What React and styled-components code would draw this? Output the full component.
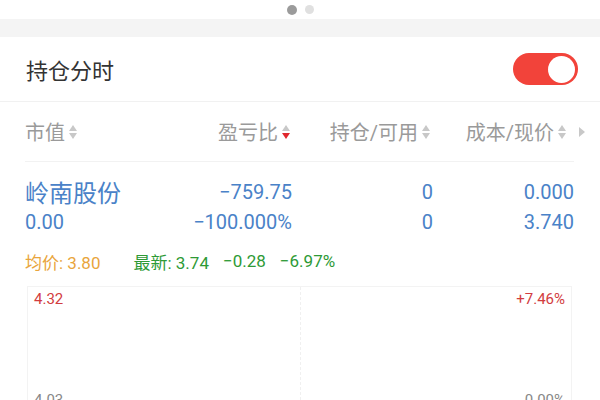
import styled, { createGlobalStyle } from "styled-components"

const GlobalStyle = createGlobalStyle`
  html, body {
    margin: 0;
    padding: 0;
    background: #ffffff;
    font-family: Roboto, "Noto Sans CJK SC", sans-serif;
  }
`

function SortArrows({ active }) {
  return (
    <Styled.Arrows>
      <svg width="8" height="14" viewBox="0 0 8 14">
        <path d="M4 0 L8 6 L0 6 Z" fill={active === "up" ? "#e0282e" : "#c8c8c8"} />
        <path d="M0 8 L8 8 L4 14 Z" fill={active === "down" ? "#e0282e" : "#c8c8c8"} />
      </svg>
    </Styled.Arrows>
  )
}

export default function App() {
  return (
    <Styled.Page>
      <GlobalStyle />
      <Styled.Dots>
        <Styled.Dot $on />
        <Styled.Dot />
      </Styled.Dots>
      <Styled.Band />
      <Styled.TitleRow>
        <Styled.Title>持仓分时</Styled.Title>
        <Styled.Toggle>
          <Styled.Knob />
        </Styled.Toggle>
      </Styled.TitleRow>

      <Styled.Body>
        <Styled.HeadRow>
          <Styled.HeadCell>市值<SortArrows /></Styled.HeadCell>
          <Styled.HeadCell $right $pad={2}>盈亏比<SortArrows active="down" /></Styled.HeadCell>
          <Styled.HeadCell $right $pad={3}>持仓/可用<SortArrows /></Styled.HeadCell>
          <Styled.HeadCell $right $pad={8}>
            成本/现价<SortArrows />
            <Styled.More>
              <svg width="6" height="10" viewBox="0 0 6 10">
                <path d="M0 0 L6 5 L0 10 Z" fill="#c8c8c8" />
              </svg>
            </Styled.More>
          </Styled.HeadCell>
        </Styled.HeadRow>

        <Styled.Rows>
          <Styled.DataRow>
            <Styled.Cell $name>岭南股份</Styled.Cell>
            <Styled.Cell $right>−759.75</Styled.Cell>
            <Styled.Cell $right>0</Styled.Cell>
            <Styled.Cell $right>0.000</Styled.Cell>
          </Styled.DataRow>
          <Styled.DataRow>
            <Styled.Cell>0.00</Styled.Cell>
            <Styled.Cell $right>−100.000%</Styled.Cell>
            <Styled.Cell $right>0</Styled.Cell>
            <Styled.Cell $right>3.740</Styled.Cell>
          </Styled.DataRow>
        </Styled.Rows>

        <Styled.InfoRow>
          <Styled.Info $color="#e9a53c">均价: 3.80</Styled.Info>
          <Styled.Info $color="#2e9a36">最新: 3.74</Styled.Info>
          <Styled.Info $color="#2e9a36">−0.28</Styled.Info>
          <Styled.Info $color="#2e9a36">−6.97%</Styled.Info>
        </Styled.InfoRow>

        <Styled.Chart>
          <Styled.CenterLine />
          <Styled.ChartLabels>
            <Styled.Label $color="#d23c40">4.32</Styled.Label>
            <Styled.Label $color="#d23c40">+7.46%</Styled.Label>
          </Styled.ChartLabels>
          <Styled.ChartLabels>
            <Styled.Label $color="#888">4.03</Styled.Label>
            <Styled.Label $color="#888">0.00%</Styled.Label>
          </Styled.ChartLabels>
        </Styled.Chart>
      </Styled.Body>
    </Styled.Page>
  )
}

const Styled = {
  Page: styled.div`
    width: 600px;
    height: 400px;
    overflow: hidden;
    background: #ffffff;
  `,
  Dots: styled.div`
    height: 19px;
    display: flex;
    justify-content: center;
    align-items: center;
    gap: 8px;
    padding-left: 1px;
  `,
  Dot: styled.span`
    width: ${p => (p.$on ? "10px" : "9px")};
    height: ${p => (p.$on ? "10px" : "9px")};
    border-radius: 50%;
    background: ${p => (p.$on ? "#9b9b9b" : "#e0e0e0")};
  `,
  Band: styled.div`
    height: 18px;
    background: #f4f4f4;
  `,
  TitleRow: styled.div`
    height: 64px;
    display: flex;
    align-items: center;
    justify-content: space-between;
    padding: 0 22px 0 26px;
    border-bottom: 1px solid #f1f1f1;
  `,
  Title: styled.div`
    font-size: 22px;
    color: #333;
  `,
  Toggle: styled.div`
    width: 65px;
    height: 32px;
    border-radius: 16px;
    background: #f2433a;
    display: flex;
    align-items: center;
    justify-content: flex-end;
    padding: 0 3px;
    box-sizing: border-box;
  `,
  Knob: styled.div`
    width: 27px;
    height: 27px;
    border-radius: 50%;
    background: #fff;
  `,
  Body: styled.div`
    padding: 0 26px 0 25px;
  `,
  HeadRow: styled.div`
    display: grid;
    grid-template-columns: 120px 147px 141px 141px;
    height: 59px;
    align-items: center;
    border-bottom: 1px solid #f2f2f2;
  `,
  HeadCell: styled.div`
    position: relative;
    display: flex;
    align-items: center;
    justify-content: ${p => (p.$right ? "flex-end" : "flex-start")};
    font-size: 20px;
    color: #9a9a9a;
    padding-right: ${p => p.$pad || 0}px;
    white-space: nowrap;
  `,
  Arrows: styled.span`
    display: inline-flex;
    margin-left: 4px;
  `,
  More: styled.span`
    position: absolute;
    right: -11px;
    top: 50%;
    margin-top: -5px;
    display: flex;
  `,
  Rows: styled.div`
    padding-top: 12px;
  `,
  DataRow: styled.div`
    display: grid;
    grid-template-columns: 120px 147px 141px 141px;
    height: 32px;
    align-items: center;
  `,
  Cell: styled.div`
    font-size: ${p => (p.$name ? "24px" : "20px")};
    color: #4a82c8;
    text-align: ${p => (p.$right ? "right" : "left")};
    white-space: nowrap;
  `,
  InfoRow: styled.div`
    display: flex;
    height: 42px;
    align-items: center;
    padding-top: 2px;
    & > span:nth-child(2) {
      margin-left: 33px;
    }
    & > span:nth-child(n + 3) {
      margin-left: 14px;
    }
  `,
  Info: styled.span`
    font-size: 17px;
    color: ${p => p.$color};
    white-space: nowrap;
  `,
  Chart: styled.div`
    position: relative;
    margin: 4px 2px 0 2px;
    height: 140px;
    border: 1px solid #f3f3f3;
    display: flex;
    flex-direction: column;
    gap: 83px;
    padding: 3px 6px 0 6px;
  `,
  CenterLine: styled.div`
    position: absolute;
    left: 50%;
    top: 0;
    bottom: 0;
    border-left: 1px dashed #f0f0f0;
  `,
  ChartLabels: styled.div`
    display: flex;
    justify-content: space-between;
    height: 18px;
    align-items: center;
  `,
  Label: styled.span`
    font-size: 15px;
    color: ${p => p.$color};
  `,
}
